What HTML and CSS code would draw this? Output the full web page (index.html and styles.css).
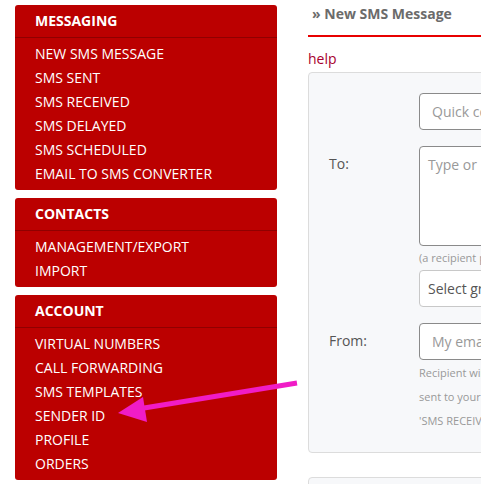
FILE: index.html
```html
<!DOCTYPE html>
<html>
<head>
<meta charset="utf-8">
<link rel="stylesheet" href="styles.css">
</head>
<body>
<div class="page">
  <aside class="sidebar">
    <div class="panel">
      <div class="panel-head">MESSAGING</div>
      <ul class="menu">
        <li>NEW SMS MESSAGE</li>
        <li>SMS SENT</li>
        <li>SMS RECEIVED</li>
        <li>SMS DELAYED</li>
        <li>SMS SCHEDULED</li>
        <li>EMAIL TO SMS CONVERTER</li>
      </ul>
    </div>
    <div class="panel">
      <div class="panel-head">CONTACTS</div>
      <ul class="menu">
        <li>MANAGEMENT/EXPORT</li>
        <li>IMPORT</li>
      </ul>
    </div>
    <div class="panel">
      <div class="panel-head">ACCOUNT</div>
      <ul class="menu">
        <li>VIRTUAL NUMBERS</li>
        <li>CALL FORWARDING</li>
        <li>SMS TEMPLATES</li>
        <li>SENDER ID</li>
        <li>PROFILE</li>
        <li>ORDERS</li>
      </ul>
    </div>
  </aside>
  <main class="main">
    <h1 class="title">» New SMS Message</h1>
    <a class="help">help</a>
    <div class="form-box">
      <div class="row">
        <div class="label"></div>
        <div class="field"><div class="input">Quick contact search</div></div>
      </div>
      <div class="row row-to">
        <div class="label">To:</div>
        <div class="field">
          <div class="textarea">Type or paste numbers here</div>
          <div class="hint">(a recipient per line)</div>
          <div class="input input-select">Select group</div>
        </div>
      </div>
      <div class="row row-from">
        <div class="label">From:</div>
        <div class="field">
          <div class="input">My email address</div>
          <div class="note">Recipient will be able to reply; replies will be<br>sent to your email and shown in the<br>'SMS RECEIVED' section</div>
        </div>
      </div>
    </div>
    <div class="form-box next"></div>
  </main>
</div>
<svg class="arrow" width="481" height="484" viewBox="0 0 481 484">
  <line x1="297" y1="383" x2="138" y2="409" stroke="#f01cc6" stroke-width="5"/>
  <polygon points="118,413 143,397 147,422" fill="#f01cc6"/>
</svg>
</body>
</html>
```

FILE: styles.css
```css
html, body {
  margin: 0;
  padding: 0;
  overflow: hidden;
  background: #fff;
}
body {
  font-family: "Open Sans", "Liberation Sans", sans-serif;
  width: 481px;
  height: 484px;
  position: relative;
}
.page {
  display: flex;
  width: 760px;
}
.sidebar {
  width: 262px;
  padding: 5px 0 0 15px;
  flex: none;
  display: flex;
  flex-direction: column;
  gap: 8px;
}
.panel {
  background: #bb0000;
  border-radius: 3px;
  color: #fff;
}
.panel-head {
  line-height: 31px;
  padding-left: 20px;
  font-weight: 700;
  font-size: 14px;
  border-bottom: 1px solid #8f0000;
  box-sizing: border-box;
  height: 33px;
}
.menu {
  list-style: none;
  margin: 0;
  padding: 4px 0 4px 20px;
}
.menu li {
  font-size: 14px;
  line-height: 24px;
}
.main {
  margin-left: 31px;
  width: 440px;
  flex: none;
}
.title {
  margin: 0;
  padding: 3px 0 0 4px;
  height: 32px;
  font-size: 14px;
  font-weight: 700;
  color: #6b6b6b;
  line-height: 22px;
  border-bottom: 2px solid #e80000;
}
.help {
  display: block;
  margin-top: 12px;
  font-size: 14px;
  line-height: 20px;
  color: #a8002e;
}
.form-box {
  margin-top: 3px;
  background: #f7f8fa;
  border: 1px solid #dcdcdc;
  border-radius: 4px;
  padding: 20px 0 40px 0;
  box-sizing: border-box;
  height: 381px;
}
.form-box.next {
  margin-top: 24px;
  height: 40px;
}
.row {
  display: flex;
}
.label {
  width: 110px;
  padding-left: 20px;
  box-sizing: border-box;
  flex: none;
  font-size: 14px;
  color: #555;
  line-height: 20px;
  padding-top: 8px;
}
.field {
  flex: 1;
}
.input, .textarea {
  border: 1px solid #8a8a8a;
  border-radius: 4px;
  background: #fff;
  font-size: 14px;
  color: #999;
  box-sizing: border-box;
  white-space: nowrap;
  overflow: hidden;
}
.input {
  height: 37px;
  line-height: 35px;
  padding-left: 12px;
}
.input-select {
  border-color: #c8c8c8;
  color: #555;
  padding-left: 8px;
}
.row-to {
  margin-top: 16px;
}
.textarea {
  height: 100px;
  padding: 8px 8px;
  line-height: 20px;
}
.hint {
  font-size: 11px;
  color: #999;
  line-height: 14px;
  margin: 5px 0 5px 0;
}
.row-from {
  margin-top: 16px;
}
.note {
  font-size: 11px;
  color: #999;
  line-height: 24px;
  margin-top: 1px;
  white-space: nowrap;
}
.arrow {
  position: absolute;
  left: 0;
  top: 0;
  pointer-events: none;
}
```
